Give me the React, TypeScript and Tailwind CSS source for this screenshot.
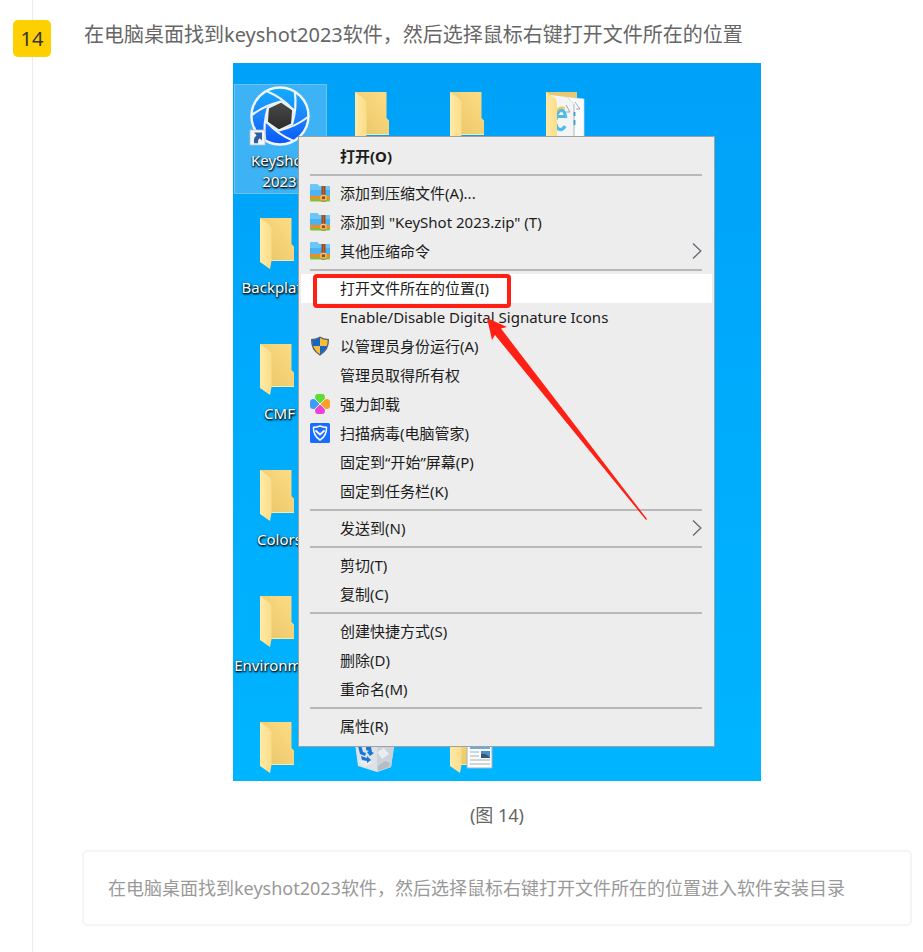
import React from "react";

const SANS = "font-['Noto_Sans','Noto_Sans_CJK_SC',sans-serif]";

function KeyShotLogo() {
  const turns = [0, 60, 120, 180, 240, 300];
  return (
    <svg width="62" height="62" viewBox="-31 -31 62 62" aria-hidden="true">
      <defs>
        <linearGradient id="lens" x1="0" y1="0" x2="0" y2="1">
          <stop offset="0" stopColor="#12aefc" />
          <stop offset="0.5" stopColor="#1b86ff" />
          <stop offset="1" stopColor="#0a55f5" />
        </linearGradient>
        <linearGradient id="core" x1="0" y1="0" x2="0" y2="1">
          <stop offset="0" stopColor="#4a4a4a" />
          <stop offset="1" stopColor="#2b2b2b" />
        </linearGradient>
      </defs>
      <circle r="28.5" fill="url(#lens)" stroke="#f3f6fa" strokeWidth="2.4" />
      <polygon
        points="1,-14.5 13.1,-6.4 12.1,8.1 -1,14.5 -13.1,6.4 -12.1,-8.1"
        fill="url(#core)"
        stroke="#e8eef5"
        strokeWidth="2"
      />
      {turns.map((a) => (
        <path
          key={a}
          d="M-28 -1Q-15 -11 1 -14.5"
          transform={`rotate(${a})`}
          fill="none"
          stroke="#eef3f8"
          strokeWidth="2.2"
        />
      ))}
      <g transform="translate(-30 14)">
        <rect width="15" height="15" fill="#f4f6f8" stroke="#b9c2cc" strokeWidth="0.8" />
        <path d="M4 2.500h8v8l-2.300-2.300C8.200 9.500 7.800 11 8.200 13.200H4.200C3.200 9.800 4.400 7.200 6.600 5.200z" fill="#2f5f9e" />
      </g>
    </svg>
  );
}

function FolderBody() {
  return (
    <>
      <path d="M0 0H31.500V26L34 28.500V43H6z" fill="url(#folderBack)" />
      <path d="M0 0L9 6.500Q11.500 8.500 11.500 11.500V43L10 51L0 44z" fill="url(#folderFlap)" />
      <path d="M11.500 42.500H34" stroke="#fbe9a4" strokeWidth="1" />
    </>
  );
}

function FolderIcon() {
  return (
    <svg width="34" height="51" viewBox="0 0 34 51" aria-hidden="true">
      <defs>
        <linearGradient id="folderBack" x1="0" y1="1" x2="1" y2="0">
          <stop offset="0" stopColor="#e8c466" />
          <stop offset="1" stopColor="#fddd85" />
        </linearGradient>
        <linearGradient id="folderFlap" x1="0" y1="0" x2="1" y2="0">
          <stop offset="0" stopColor="#ffeaa6" />
          <stop offset="1" stopColor="#fbdd8a" />
        </linearGradient>
      </defs>
      <FolderBody />
    </svg>
  );
}

function WebFolderIcon() {
  return (
    <svg width="40" height="51" viewBox="0 0 40 51" aria-hidden="true">
      <path d="M0 0H31V43H0z" fill="#e9c96f" />
      <path d="M5 3L20 5L28 9V51H8z" fill="#f2f4f5" />
      <path d="M21 5L38 7V51H28V12z" fill="#fafbfb" stroke="#d5d9dc" strokeWidth="0.7" />
      <path d="M28 12V51" stroke="#c9cdd1" strokeWidth="1.400" />
      <path d="M20 13l4 7h-4M29 10l5 7h-4" fill="none" stroke="#9aa0a5" strokeWidth="0.9" />
      <path d="M19 34c-2.500 5-8 5-9-2M10 28c0-9 8-15 9.500-3.500H11" fill="none" stroke="#4dbcea" strokeWidth="3.200" />
      <path d="M28.500 20v4M28.500 28v5" fill="none" stroke="#3f9fc9" strokeWidth="1.800" />
      <path d="M10 20q3-6 9-4" fill="none" stroke="#f6c343" strokeWidth="1.800" />
      <path d="M0 0L9 6Q11 8 11 11V51H0z" fill="url(#folderFlap)" />
    </svg>
  );
}

function RecycleBinIcon() {
  return (
    <svg width="42" height="51" viewBox="0 0 42 51" aria-hidden="true">
      <path d="M0 14L41 14L37 45L23 50L4 44z" fill="#dce2e8" />
      <path d="M23 24L41 20L37 45L23 50z" fill="#cbd2d8" />
      <path d="M23 30L30 26L35 32L28 37zM4 39L12 36L19 41L10 45z" fill="#e9edf0" />
      <path d="M24 44L31 39L36 41L35 45L24 49z" fill="#b4bdc5" />
      <path d="M4 24l3-1l2 7l3 1l-1 3l-5-2zM12 24l5 1l1 5l2 1l-4 3l-3-4l2-1l-3-1zM7 34l6 2v-2l4 4l-4 3v-2l-5-1z" fill="#1778d8" />
    </svg>
  );
}

function DocumentFolderIcon() {
  return (
    <svg width="43" height="51" viewBox="0 0 43 51" aria-hidden="true">
      <FolderBody />
      <path d="M17 10H42V46H17z" fill="#fbfcfd" stroke="#a9b2ba" strokeWidth="1" />
      <path d="M20 26H40" stroke="#3d8fd6" strokeWidth="1.500" />
      <path d="M20 30H29M20 34H29M20 38H40M20 42H40" stroke="#a6adb4" strokeWidth="1" />
      <path d="M31 29H40V36H31z" fill="#4a90c8" />
      <path d="M31 36V32Q36 31 40 36z" fill="#37556b" />
    </svg>
  );
}

function ArchiveIcon() {
  return (
    <svg width="20" height="20" viewBox="0 0 20 20" aria-hidden="true">
      <path d="M0 2.500Q0 1 1.500 1H7L9 3H18.500Q20 3 20 4.500V14H0z" fill="#4bb3f3" />
      <path d="M0 2.500Q0 1 1.500 1H7L9 3H18.500Q20 3 20 4.500V7H0z" fill="#6cc6fa" />
      <path d="M0 13H20V16H0z" fill="#f58a1f" />
      <path d="M0 16H20V17.500Q20 18.500 19 18.500H1Q0 18.500 0 17.500z" fill="#7fc241" />
      <path d="M11.500 3H15.500V18.500H11.500z" fill="#9a4a1c" />
      <path d="M13.500 3V12" stroke="#b5652c" strokeWidth="1" />
      <rect x="11" y="12.500" width="5" height="4.500" rx="1.500" fill="none" stroke="#fbc56a" strokeWidth="1.300" />
    </svg>
  );
}

function ShieldIcon() {
  return (
    <svg width="20" height="20" viewBox="0 0 20 20" aria-hidden="true">
      <defs>
        <clipPath id="shield">
          <path d="M10 1.500Q13 3.500 18 3.800Q18.500 13.500 10 18.500Q1.500 13.500 2 3.800Q7 3.500 10 1.500z" />
        </clipPath>
      </defs>
      <g clipPath="url(#shield)">
        <path d="M0 0H10V10H0z" fill="#1467c6" />
        <path d="M10 0H20V10H10z" fill="#fdbd35" />
        <path d="M0 10H10V20H0z" fill="#fdbd35" />
        <path d="M10 10H20V20H10z" fill="#1467c6" />
      </g>
      <path d="M10 1.200Q13 3.300 18.300 3.600Q18.800 13.700 10 19Q1.200 13.700 1.700 3.600Q7 3.300 10 1.200z" fill="none" stroke="#55616b" strokeWidth="1.400" />
    </svg>
  );
}

function CloverIcon() {
  const petal = "M10 10L5.300 5.300Q4.300 0 8 0H12Q15.700 0 14.700 5.300z";
  return (
    <svg width="20" height="20" viewBox="0 0 20 20" aria-hidden="true">
      <path d={petal} fill="#5ddc35" />
      <path d={petal} fill="#fba02a" transform="rotate(90 10 10)" />
      <path d={petal} fill="#ee3fd8" transform="rotate(180 10 10)" />
      <path d={petal} fill="#3d9cf8" transform="rotate(270 10 10)" />
      <path d="M5 5L15 15M15 5L5 15" stroke="#ededed" strokeWidth="1" />
    </svg>
  );
}

function PcManagerIcon() {
  return (
    <svg width="20" height="20" viewBox="0 0 20 20" aria-hidden="true">
      <rect width="20" height="20" rx="1.500" fill="#1a6dff" />
      <path d="M10 3Q13 4.300 16.500 4.300Q17 12.500 10 17Q3 12.500 3.500 4.300Q7 4.300 10 3z" fill="none" stroke="#fff" strokeWidth="1.500" strokeLinejoin="round" />
      <path d="M5.500 7.500L10 11.500L14.500 7.500" fill="none" stroke="#fff" strokeWidth="1.800" />
    </svg>
  );
}

function Chevron() {
  return (
    <svg width="10" height="18" viewBox="0 0 10 18" aria-hidden="true">
      <path d="M1 1.500L8.800 9L1 16.500" fill="none" stroke="#6b6b76" strokeWidth="1.400" />
    </svg>
  );
}

type Item = {
  text: string;
  icon?: React.ReactNode;
  bold?: boolean;
  submenu?: boolean;
  active?: boolean;
};

const groups: Item[][] = [
  [{ text: "打开(O)", bold: true }],
  [
    { text: "添加到压缩文件(A)...", icon: <ArchiveIcon /> },
    { text: '添加到 "KeyShot 2023.zip" (T)', icon: <ArchiveIcon /> },
    { text: "其他压缩命令", icon: <ArchiveIcon />, submenu: true },
  ],
  [
    { text: "打开文件所在的位置(I)", active: true },
    { text: "Enable/Disable Digital Signature Icons" },
    { text: "以管理员身份运行(A)", icon: <ShieldIcon /> },
    { text: "管理员取得所有权" },
    { text: "强力卸载", icon: <CloverIcon /> },
    { text: "扫描病毒(电脑管家)", icon: <PcManagerIcon /> },
    { text: "固定到“开始”屏幕(P)" },
    { text: "固定到任务栏(K)" },
  ],
  [{ text: "发送到(N)", submenu: true }],
  [{ text: "剪切(T)" }, { text: "复制(C)" }],
  [{ text: "创建快捷方式(S)" }, { text: "删除(D)" }, { text: "重命名(M)" }],
  [{ text: "属性(R)" }],
];

function MenuRow({ item }: { item: Item }) {
  return (
    <li className={item.active ? "relative bg-white" : ""}>
      <button
        type="button"
        className={`flex h-[29px] w-full items-center gap-[10px] pr-[10px] pb-0.5 pl-[9px] text-left text-[15px] leading-5 whitespace-nowrap text-[#1c1c1c] ${item.bold ? "font-bold" : ""}`}
      >
        <span className="w-5 shrink-0">{item.icon}</span>
        <span className="flex-1">{item.text}</span>
        {item.submenu && <Chevron />}
      </button>
      {item.active && (
        <span className="pointer-events-none absolute top-0 left-3 h-[34px] w-[198px] rounded-[4px] border-4 border-[#ff2015]" />
      )}
    </li>
  );
}

function ContextMenu() {
  return (
    <div className="absolute top-[73px] left-[65px] w-[417px] border border-[#a0a0a0] bg-[#ededed] px-0.5 pt-[5px] pb-[5px]">
      {groups.map((group, i) => (
        <React.Fragment key={i}>
          {i > 0 && <hr className="my-[3px] mr-[10px] ml-[9px] border-t-2 border-[#b8b8b8]" />}
          <ul>
            {group.map((item) => (
              <MenuRow key={item.text} item={item} />
            ))}
          </ul>
        </React.Fragment>
      ))}
    </div>
  );
}

const LABEL =
  "text-center text-[15px] leading-[21px] whitespace-nowrap text-white [text-shadow:1px_1px_2px_#000,0_1px_2px_#000]";

function DesktopFolder({ label }: { label?: string }) {
  return (
    <div className="flex h-[110px] w-[93px] flex-col items-center pt-2 pr-0.5">
      <div className="mb-2 ml-[-5px]">
        <FolderIcon />
      </div>
      {label && <span className={LABEL}>{label}</span>}
    </div>
  );
}

function Desktop() {
  return (
    <div className="relative mx-auto h-[718px] w-[528px] max-w-full overflow-hidden bg-linear-to-b from-[#00a1f8] via-[#00abfc] to-[#00b5ff]">
      <div className="grid grid-cols-[repeat(4,93px)] gap-x-0.5 gap-y-4 px-px pt-[21px]">
        <div className="flex h-[110px] w-[93px] flex-col items-center border border-[#6cc5f8] bg-[#3db3f5] pr-0.5">
          <KeyShotLogo />
          <span className={`${LABEL} mt-[3px]`}>
            KeyShot
            <br />
            2023
          </span>
        </div>
        <DesktopFolder />
        <DesktopFolder />
        <div className="flex pt-2 pl-[27px]">
          <WebFolderIcon />
        </div>
        <div className="col-span-4">
          <DesktopFolder label="Backplates" />
        </div>
        <div className="col-span-4">
          <DesktopFolder label="CMF" />
        </div>
        <div className="col-span-4">
          <DesktopFolder label="Colors" />
        </div>
        <div className="col-span-4">
          <DesktopFolder label="Environment" />
        </div>
        <DesktopFolder />
        <div className="flex pt-2 pl-[25px]">
          <RecycleBinIcon />
        </div>
        <div className="flex pt-2 pl-[26px]">
          <DocumentFolderIcon />
        </div>
      </div>
      <ContextMenu />
      <svg
        className="pointer-events-none absolute top-[255px] left-[253px]"
        width="164"
        height="204"
        viewBox="0 0 164 204"
        aria-hidden="true"
      >
        <path d="M1 0L21 9L15 10.500L161 201L160 202L9 17L6 22z" fill="#ff2015" />
      </svg>
    </div>
  );
}

export default function App() {
  return (
    <main className={`flex min-h-screen bg-white pr-[11px] pl-[13px] ${SANS}`}>
      <div className="flex w-[38px] shrink-0 flex-col items-center">
        <span className="h-5 w-px bg-[#ececec]" />
        <span className="flex h-[37px] w-full items-center justify-center rounded-[5px] bg-[#ffd000] text-[20px] leading-6 text-[#333]">
          14
        </span>
        <span className="w-px flex-1 bg-[#ececec]" />
      </div>
      <section className="ml-[31px] min-w-0 flex-1 pb-6">
        <p className="pt-[21px] pl-0.5 text-[20px] leading-7 text-[#666]">
          在电脑桌面找到keyshot2023软件，然后选择鼠标右键打开文件所在的位置
        </p>
        <figure className="mt-[14px]">
          <Desktop />
          <figcaption className="mt-5 text-center text-[18px] leading-7 text-[#666]">(图 14)</figcaption>
        </figure>
        <p className="mt-[21px] rounded-[5px] border-2 border-[#f4f4f4] px-6 py-[22px] text-[18px] leading-7 text-[#999]">
          在电脑桌面找到keyshot2023软件，然后选择鼠标右键打开文件所在的位置进入软件安装目录
        </p>
      </section>
    </main>
  );
}
